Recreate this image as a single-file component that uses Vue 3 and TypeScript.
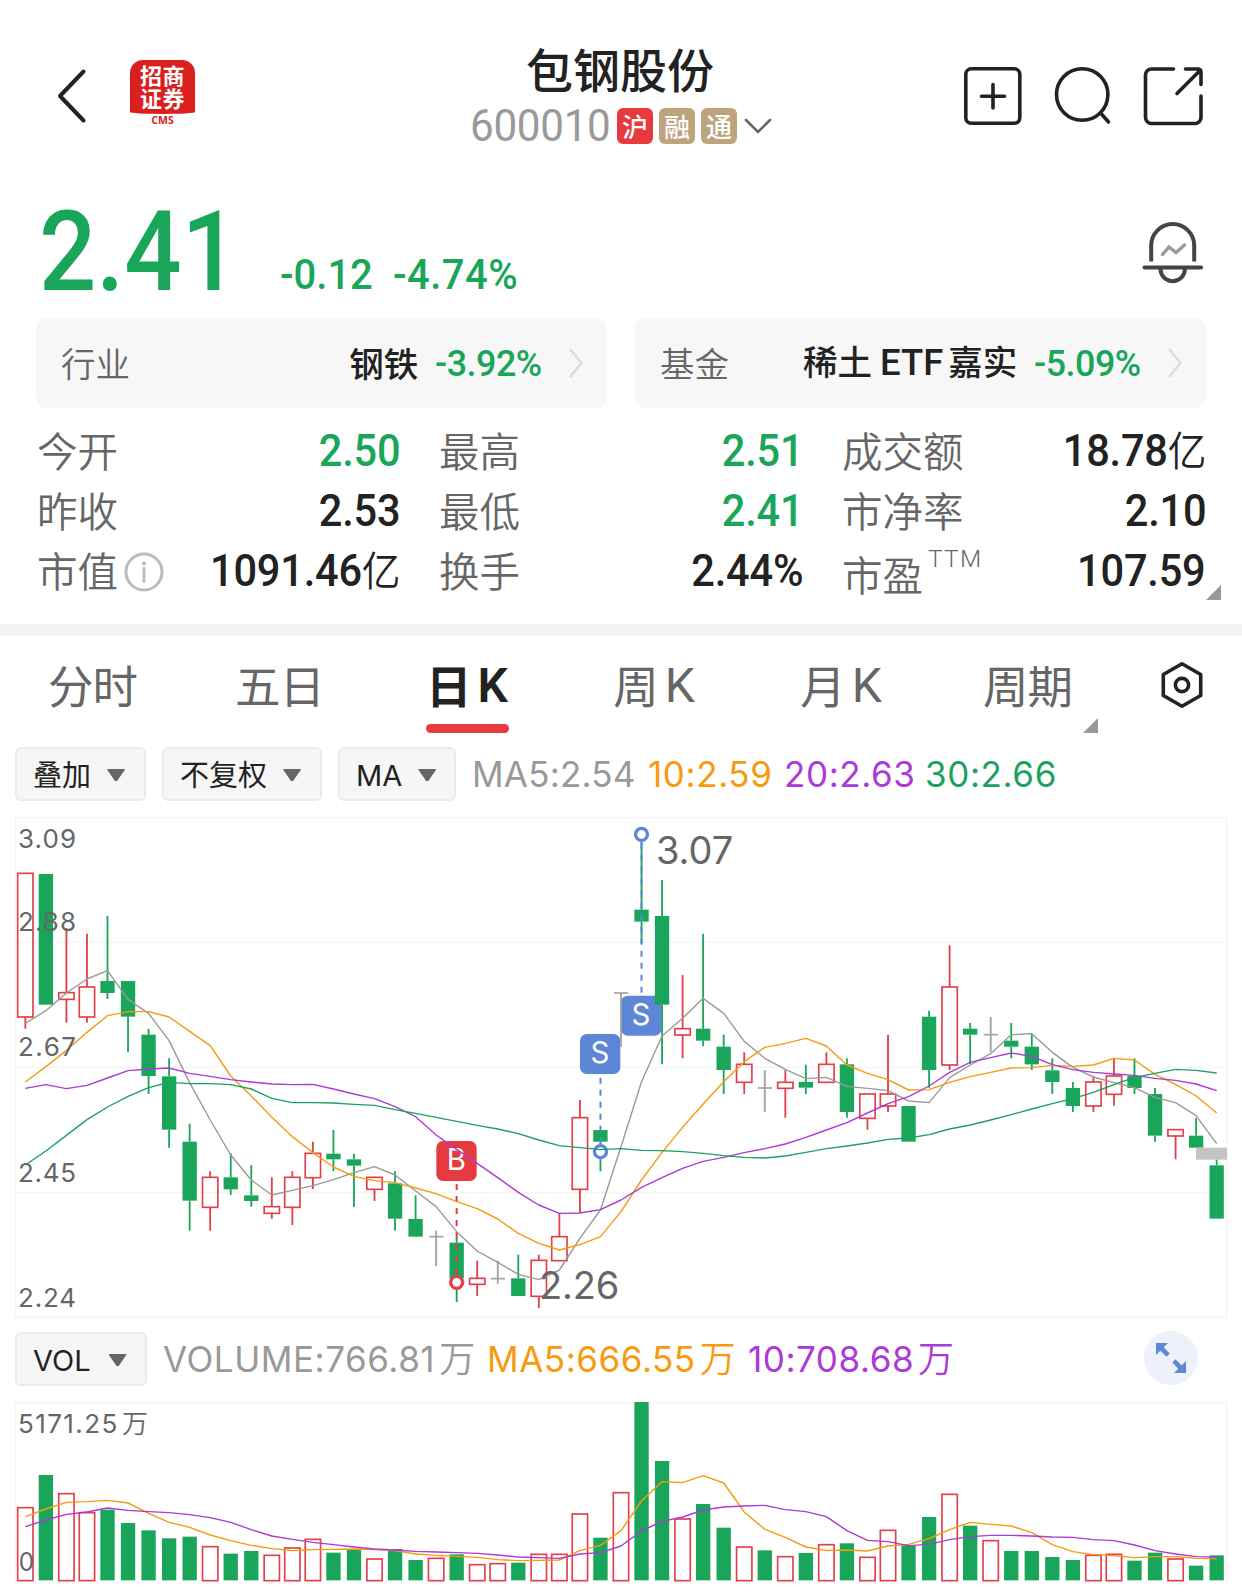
<script setup lang="ts">
type Kind = 'r' | 'g' | 'n'
type Candle = [Kind, number, number, number, number]

/* Chart geometry is kept at three units per pixel. */
const STEP = 61.62
const cx = (i: number): number => 76 + STEP * i

const candles: Candle[] = [
  ['r', 190, 190, 621, 656], ['g', 192, 192, 584, 584], ['r', 355, 548, 568, 638], ['r', 371, 531, 621, 638],
  ['g', 318, 513, 549, 567], ['g', 513, 513, 620, 727], ['g', 656, 674, 798, 852], ['g', 745, 799, 959, 1013],
  ['g', 941, 995, 1172, 1262], ['r', 1084, 1102, 1192, 1262], ['g', 1030, 1102, 1138, 1155], ['g', 1066, 1156, 1173, 1190],
  ['r', 1102, 1190, 1210, 1226], ['r', 1084, 1102, 1192, 1245], ['r', 995, 1030, 1103, 1137], ['g', 960, 1031, 1048, 1084],
  ['g', 1031, 1048, 1067, 1191], ['r', 1100, 1102, 1138, 1173], ['g', 1084, 1120, 1226, 1262], ['g', 1156, 1227, 1280, 1280],
  ['n', 1262, 1280, 1280, 1369], ['g', 1280, 1298, 1405, 1476], ['r', 1352, 1405, 1423, 1458], ['n', 1352, 1406, 1406, 1422],
  ['g', 1334, 1405, 1458, 1458], ['r', 1334, 1351, 1459, 1494], ['r', 1210, 1280, 1352, 1352], ['r', 870, 923, 1138, 1208],
  ['g', 960, 960, 995, 1084], ['n', 548, 549, 549, 710], ['g', 80, 299, 335, 400], ['g', 210, 318, 584, 763],
  ['r', 495, 656, 675, 745], ['g', 371, 656, 692, 709], ['g', 674, 710, 780, 852], ['r', 727, 763, 817, 852],
  ['n', 781, 834, 834, 906], ['r', 781, 817, 835, 923], ['g', 764, 816, 833, 852], ['r', 727, 763, 817, 817],
  ['g', 745, 763, 906, 923], ['r', 851, 852, 925, 959], ['r', 674, 852, 888, 906], ['g', 888, 888, 995, 995],
  ['g', 602, 620, 780, 833], ['r', 406, 531, 765, 780], ['g', 639, 656, 674, 762], ['n', 621, 674, 674, 726],
  ['g', 639, 692, 710, 745], ['g', 673, 710, 763, 780], ['g', 745, 781, 816, 852], ['g', 816, 834, 888, 906],
  ['r', 799, 816, 888, 906], ['r', 745, 798, 853, 887], ['g', 745, 798, 834, 852], ['g', 834, 852, 977, 995],
  ['r', 957, 959, 978, 1048], ['g', 924, 977, 1013, 1013], ['g', 1048, 1066, 1226, 1226],
]

const volKinds = 'rgrrgggggrggrrrggrggrgrrgrrrgrggrggrgrgrgrrggrgrggggrrggrgg'
const volTops: number[] = [
  563, 465, 521, 578, 569, 609, 631, 655, 650, 680, 701, 693, 706, 684, 658, 698, 687, 717, 687, 720,
  715, 703, 734, 731, 728, 703, 703, 582, 653, 518, 246, 423, 597, 552, 623, 681, 691, 710, 699, 674,
  670, 712, 631, 676, 591, 523, 617, 662, 693, 693, 711, 720, 706, 703, 722, 698, 717, 737, 706,
]

const poly = (ys: number[]): string => ys.map((y, i) => `${cx(i).toFixed(1)},${y}`).join(' ')

const priceLines = [
  { color: '#999999', pts: poly([640, 602, 549, 507, 482, 568, 610, 692, 818, 930, 1035, 1110, 1155, 1141, 1127, 1109, 1088, 1070, 1095, 1143, 1190, 1265, 1323, 1357, 1393, 1409, 1380, 1285, 1200, 1010, 815, 678, 625, 565, 610, 694, 745, 778, 806, 802, 829, 835, 842, 873, 878, 803, 765, 731, 674, 671, 727, 772, 801, 818, 833, 862, 878, 917, 1001]) },
  { color: '#f79a10', pts: poly([816, 770, 721, 667, 617, 605, 605, 621, 664, 707, 798, 858, 922, 980, 1028, 1071, 1099, 1112, 1118, 1134, 1151, 1175, 1196, 1227, 1270, 1300, 1320, 1304, 1280, 1205, 1110, 1027, 952, 882, 815, 755, 712, 700, 685, 708, 765, 790, 809, 840, 839, 817, 800, 787, 774, 773, 766, 769, 765, 745, 750, 793, 823, 858, 909]) },
  { color: '#ab3ad6', pts: poly([835, 824, 836, 826, 804, 782, 777, 774, 790, 799, 809, 816, 822, 824, 823, 837, 852, 866, 890, 920, 975, 1018, 1060, 1103, 1147, 1185, 1210, 1209, 1199, 1170, 1132, 1103, 1075, 1054, 1042, 1028, 1016, 1002, 982, 960, 938, 909, 881, 860, 828, 787, 757, 743, 729, 739, 764, 779, 787, 792, 796, 805, 811, 822, 842]) },
  { color: '#1ba160', pts: poly([1065, 1023, 976, 929, 891, 859, 833, 817, 821, 821, 824, 837, 865, 878, 878, 879, 883, 886, 899, 910, 922, 934, 946, 957, 971, 990, 1007, 1013, 1019, 1016, 1021, 1022, 1025, 1030, 1037, 1042, 1044, 1038, 1027, 1016, 1008, 999, 988, 984, 974, 957, 945, 930, 914, 897, 881, 866, 847, 824, 802, 790, 778, 781, 789]) },
]
const volLines = [
  { color: '#f79a10', pts: poly([590, 567, 547, 545, 541, 549, 580, 607, 622, 645, 662, 676, 686, 692, 689, 688, 687, 689, 692, 702, 706, 709, 712, 719, 722, 721, 720, 692, 676, 632, 543, 485, 488, 467, 489, 576, 628, 652, 681, 692, 690, 693, 678, 673, 656, 629, 607, 613, 618, 638, 674, 695, 704, 707, 713, 710, 710, 715, 716]) },
  { color: '#ab3ad6', pts: poly([620, 600, 583, 576, 564, 571, 575, 578, 584, 593, 607, 629, 648, 658, 667, 674, 681, 687, 690, 694, 696, 698, 700, 705, 711, 713, 715, 702, 698, 678, 633, 604, 591, 570, 561, 558, 556, 569, 575, 590, 632, 661, 665, 677, 673, 659, 650, 646, 646, 648, 651, 652, 659, 662, 675, 692, 702, 710, 711]) },
]

const colorOf: Record<Kind, string> = { r: '#e2404a', g: '#1aa65a', n: '#a3a3a3' }

const axis = [
  { t: '3.09', y: 113 }, { t: '2.88', y: 362 }, { t: '2.67', y: 738 }, { t: '2.45', y: 1116 }, { t: '2.24', y: 1491 },
]

interface Stat { k: string; v: string; up?: boolean; unit?: string; info?: boolean; ttm?: boolean }
const stats: Stat[][] = [
  [{ k: '今开', v: '2.50', up: true }, { k: '最高', v: '2.51', up: true }, { k: '成交额', v: '18.78', unit: '亿' }],
  [{ k: '昨收', v: '2.53' }, { k: '最低', v: '2.41', up: true }, { k: '市净率', v: '2.10' }],
  [{ k: '市值', v: '1091.46', unit: '亿', info: true }, { k: '换手', v: '2.44%' }, { k: '市盈', v: '107.59', ttm: true }],
]

const tabs = ['分时', '五日', '日K', '周K', '月K', '周期']
</script>

<template>
  <main class="app">
    <header class="head">
      <svg class="back" width="30" height="56" viewBox="0 0 30 56"><path d="M26.500 3.500 3 28l23.500 24.500" fill="none" stroke="#222" stroke-width="4" stroke-linecap="round" stroke-linejoin="round" /></svg>
      <div class="logo">
        <div class="logo-red"><span>招商</span><span>证券</span></div>
        <div class="logo-cms">CMS</div>
      </div>
      <div class="title">
        <div class="name">包钢股份</div>
        <div class="code">
          <span class="num">600010</span>
          <i class="tag hot">沪</i><i class="tag">融</i><i class="tag">通</i>
          <svg class="chev" width="28" height="18" viewBox="0 0 28 18"><path d="M2 3l12 12L26 3" fill="none" stroke="#666" stroke-width="2.600" stroke-linecap="round" /></svg>
        </div>
      </div>
      <div class="tools">
        <svg width="60" height="60" viewBox="0 0 60 60" fill="none" stroke="#222" stroke-width="3.600" stroke-linecap="round">
          <rect x="2.800" y="2.800" width="54" height="54.500" rx="5.500" /><path d="M30 18.500v23.500M18.500 30.200h23" />
        </svg>
        <svg width="60" height="60" viewBox="0 0 60 60" fill="none" stroke="#222" stroke-width="3.600" stroke-linecap="round">
          <circle cx="29.200" cy="28.500" r="25.700" /><path d="M48 47.500l7.500 8.500" />
        </svg>
        <svg width="60" height="60" viewBox="0 0 60 60" fill="none" stroke="#222" stroke-width="3.600" stroke-linecap="round" stroke-linejoin="round">
          <path d="M30.500 3H8.500a6 6 0 0 0-6 6V51.500a6 6 0 0 0 6 6H52a6 6 0 0 0 6-6V30M42.500 3H55a3 3 0 0 1 3 3V18.500M57 4.500 34 27.500" />
        </svg>
      </div>
    </header>

    <section class="price">
      <span class="big">2.41</span>
      <span class="chg">-0.12</span>
      <span class="chg pct">-4.74%</span>
      <svg class="bell" width="62" height="64" viewBox="0 0 62 64" fill="none" stroke="#444" stroke-width="4" stroke-linecap="round">
        <path d="M9.200 40.500V24.500a21.500 21.500 0 0 1 43 0V40.500" stroke-linecap="butt" />
        <path d="M2.500 46.500h56.500" />
        <path d="M18.500 48a12.200 12.200 0 0 0 24.400 0" />
        <path d="M20.500 33.500l6.500-7.500 7 5.500 8.500-7.500" stroke="#999" stroke-width="3.400" />
      </svg>
    </section>

    <section class="cards">
      <div class="card"><span class="k">行业</span><b>钢铁</b><span class="p">-3.92%</span>
        <svg width="16" height="32" viewBox="0 0 16 32"><path d="M2 2l11.500 14L2 30" fill="none" stroke="#ddd" stroke-width="2.600" /></svg></div>
      <div class="card"><span class="k">基金</span><b>稀土<em>ETF</em>嘉实</b><span class="p">-5.09%</span>
        <svg width="16" height="32" viewBox="0 0 16 32"><path d="M2 2l11.500 14L2 30" fill="none" stroke="#ddd" stroke-width="2.600" /></svg></div>
    </section>

    <section class="stats">
      <div v-for="(row, ri) in stats" :key="ri" class="row">
        <div v-for="c in row" :key="c.k" class="cell">
          <span class="lab" :class="{ low: c.ttm }">{{ c.k }}</span>
          <svg v-if="c.info" class="info" width="40" height="40" viewBox="0 0 40 40"><circle cx="20" cy="20" r="18" fill="none" stroke="#bbb" stroke-width="3" /><path d="M20 16.500v13" stroke="#bbb" stroke-width="2.800" stroke-linecap="round" /><circle cx="20" cy="11.500" r="2" fill="#bbb" /></svg>
          <sup v-if="c.ttm" class="ttm">TTM</sup>
          <span class="val" :class="{ green: c.up }">{{ c.v }}<i v-if="c.unit">{{ c.unit }}</i></span>
        </div>
      </div>
      <svg class="more" width="15" height="15" viewBox="0 0 15 15"><path d="M15 0v15H0z" fill="#999" /></svg>
    </section>

    <div class="divider"></div>

    <nav class="tabs">
      <div v-for="t in tabs" :key="t" class="tab" :class="{ on: t === '日K' }">
        <span>{{ t[0] }}</span><span v-if="t[1] === 'K'" class="lat">K</span><span v-else>{{ t[1] }}</span>
        <svg v-if="t === '周期'" class="corner" width="15" height="15" viewBox="0 0 15 15"><path d="M15 0v15H0z" fill="#999" /></svg>
      </div>
      <svg class="gear" width="44" height="48" viewBox="0 0 44 48" fill="none" stroke="#222" stroke-width="3.600" stroke-linejoin="round"><path d="M22 2.800 40.700 13.500v21L22 45.300 3.300 34.500v-21z" /><circle cx="22" cy="24" r="6.600" /></svg>
    </nav>

    <div class="bar">
      <button class="btn b1">叠加<i></i></button>
      <button class="btn b2">不复权<i></i></button>
      <button class="btn b3">MA<i></i></button>
      <span class="lg l1">MA5:2.54</span><span class="lg l2">10:2.59</span><span class="lg l3">20:2.63</span><span class="lg l4">30:2.66</span>
    </div>

    <svg class="chart" width="1242" height="520" viewBox="0 0 3726 1560">
      <g stroke="#f4f4f4" stroke-width="4" fill="none">
        <rect x="46" y="23" width="3634" height="1498" />
        <path d="M46 397H3680M46 772H3680M46 1147H3680" />
      </g>
      <g font-family="Inter, sans-serif" font-size="88" fill="#fff" text-anchor="middle">
        <rect x="1309" y="993" width="121" height="120" rx="20" fill="#e63a40" /><text x="1369" y="1080">B</text>
        <rect x="1740" y="672" width="121" height="120" rx="20" fill="#5d86d6" /><text x="1800" y="759">S</text>
        <rect x="1863" y="557" width="121" height="120" rx="20" fill="#5d86d6" /><text x="1923" y="644">S</text>
      </g>
      <g v-for="(c, i) in candles" :key="i" :stroke="colorOf[c[0]]" fill="none">
        <path :d="`M${cx(i)} ${c[1]}V${c[2]}M${cx(i)} ${c[3]}V${c[4]}`" stroke-width="5.500" />
        <rect v-if="c[0] === 'g'" :x="cx(i) - 21.500" :y="c[2]" width="43" :height="c[3] - c[2]" :fill="colorOf.g" stroke="none" />
        <rect v-else-if="c[0] === 'r'" :x="cx(i) - 23" :y="c[2]" width="46" :height="c[3] - c[2]" stroke-width="5" />
        <path v-else :d="`M${cx(i) - 21} ${c[2]}h43`" stroke-width="5" />
      </g>
      <rect x="3588" y="1013" width="93" height="36" fill="#c4c4c4" />
      <g fill="none" stroke-width="6" stroke-dasharray="18 18">
        <path d="M1370 1122V1400" stroke="#e63a40" />
        <path d="M1801.500 803V1008" stroke="#5d86d6" />
        <path d="M1924.500 96V550" stroke="#5d86d6" stroke-dashoffset="-2" />
      </g>
      <g fill="#fff" stroke-width="10">
        <circle cx="1370" cy="1417" r="18" stroke="#e2404a" />
        <circle cx="1801.500" cy="1025" r="18" stroke="#5d86d6" />
        <circle cx="1924.500" cy="73" r="18" stroke="#5d86d6" />
      </g>
      <polyline v-for="l in priceLines" :key="l.color" :points="l.pts" fill="none" :stroke="l.color" stroke-width="4.200" stroke-linejoin="round" />
      <g font-family="Inter, sans-serif" fill="#666">
        <text v-for="a in axis" :key="a.t" x="54" :y="a.y" font-size="78" textLength="174">{{ a.t }}</text>
        <text x="1968" y="162" font-size="114" textLength="232">3.07</text>
        <text x="1617" y="1467" font-size="114" textLength="241">2.26</text>
      </g>
    </svg>

    <div class="bar vol">
      <button class="btn b4">VOL<i></i></button>
      <span class="lg v1">VOLUME:766.81<u>万</u></span><span class="lg v2">MA5:666.55<u>万</u></span><span class="lg v3">10:708.68<u>万</u></span>
      <svg class="expand" width="54" height="54" viewBox="0 0 54 54">
        <circle cx="27" cy="27" r="27" fill="#edf1fa" />
        <g fill="#5f87d6" stroke="#5f87d6" stroke-width="4.600"><path d="M12 12h12L12 24z" stroke="none" /><path d="M15 15l9.200 9.200" /><path d="M42 42H30l12-12z" stroke="none" /><path d="M39 39l-9.200-9.200" /></g>
      </svg>
    </div>

    <svg class="chart" width="1242" height="204" viewBox="0 204 3726 612">
      <path d="M46 785V248H3680V785" stroke="#f4f4f4" stroke-width="4" fill="none" />
      <template v-for="(t, i) in volTops" :key="i">
        <rect v-if="volKinds[i] === 'g'" :x="cx(i) - 21.500" :y="t" width="43" :height="781 - t" fill="#1aa65a" />
        <rect v-else :x="cx(i) - 23" :y="t" width="46" :height="782 - t" fill="none" stroke="#e2404a" stroke-width="5" />
      </template>
      <polyline v-for="l in volLines" :key="l.color" :points="l.pts" fill="none" :stroke="l.color" stroke-width="4.200" stroke-linejoin="round" />
      <g font-family="Inter, 'Noto Sans CJK SC', sans-serif" font-size="78" fill="#666">
        <text x="54" y="339" textLength="298">5171.25</text><text x="366" y="339" font-weight="350">万</text>
        <text x="56" y="752" textLength="46" lengthAdjust="spacingAndGlyphs">0</text>
      </g>
    </svg>
  </main>
</template>

<style>
body { background: #fff; }
</style>

<style scoped>
.app { width: 1242px; height: 1592px; overflow: hidden; background: #fff; color: #222; font-family: Roboto, 'Noto Sans CJK SC', sans-serif; }
.app svg { display: block; flex: none; }
i, em, u { font-style: normal; text-decoration: none; }
span, b { white-space: nowrap; }

.head { height: 160px; display: flex; box-sizing: border-box; padding: 0 39px 0 57px; }
.back { margin-top: 68px; }
.logo { margin: 60px 0 0 43px; width: 65px; height: 66px; border-radius: 13px; flex: none; box-shadow: 0 0 1px #ccc; }
.logo-red { height: 54px; background: #d9201f; color: #fff; font: 700 22px/23px 'Noto Sans CJK SC', sans-serif; text-align: center; padding-top: 3px; box-sizing: border-box; border-radius: 13px 13px 50% 50% / 13px 13px 2px 2px; }
.logo-red span { display: block; height: 23px; letter-spacing: .5px; }
.logo-cms { font: 700 10.500px/12px 'Open Sans', sans-serif; color: #d9201f; text-align: center; }
.title { margin-left: 275px; width: 302px; }
.name { margin: 44px 0 0 56px; height: 48px; font: 500 47px/48px 'Noto Sans CJK SC', sans-serif; }
.code { display: flex; align-items: center; margin-top: 10px; height: 48px; }
.num { font-size: 43.500px; color: #999; width: 147px; letter-spacing: -.3px; transform: scaleX(.97); transform-origin: 0 50%; }
.tag { width: 36px; height: 36px; border-radius: 6px; background: #bda47c; color: #fff; font: 500 26px/35px 'Noto Sans CJK SC', sans-serif; text-align: center; margin-right: 6px; flex: none; }
.tag.hot { background: #e63a3f; }
.chev { margin-left: 1px; }
.tools { margin: 66px 0 0 auto; display: flex; gap: 30px; flex: none; }

.price { height: 158px; display: flex; align-items: baseline; color: #1aa65a; }
.big { font-size: 112px; font-weight: 500; line-height: 183px; margin-left: 39px; width: 241px; transform: scaleX(.9); transform-origin: 0 50%; }
.chg { font-size: 42.500px; font-weight: 500; width: 113px; transform: translateY(-1.500px) scaleX(.94); transform-origin: 0 50%; }
.chg.pct { width: auto; letter-spacing: .5px; }
.bell { margin: 60.500px 38px 0 auto; align-self: flex-start; }

.cards { display: flex; height: 90px; padding: 0 36px; gap: 28px; }
.card { flex: 1; background: #f7f7f7; border-radius: 11px; display: flex; align-items: center; padding: 0 23px 0 25px; }
.card .k { color: #666; margin: 0 auto 3px 0; font: 350 34.500px/40px 'Noto Sans CJK SC', sans-serif; }
.card b { font: 500 34.500px/40px 'Noto Sans CJK SC', sans-serif; margin-bottom: 3px; }
.card em { font-family: Roboto, sans-serif; font-size: 36.500px; margin: 0 5px 0 8px; }
.card .p { color: #1aa65a; font-size: 37.500px; font-weight: 500; margin: 0 26px 0 12px; letter-spacing: -.5px; transform: scaleX(.955); transform-origin: 100% 50%; }

.stats { height: 216px; padding: 13.500px 36px 0; box-sizing: border-box; position: relative; }
.row { display: grid; grid-template-columns: 364px 365px 365px; column-gap: 38px; height: 60px; }
.cell { display: flex; align-items: center; min-width: 0; height: 60px; }
.lab { font: 350 40.500px/56px 'Noto Sans CJK SC', sans-serif; color: #666; margin: 0 0 3px 1px; }
.lab.low { margin-bottom: -4px; }
.info { margin-left: 6px; }
.ttm { font: 350 24.500px/24px Roboto, sans-serif; color: #666; align-self: flex-start; margin: 5px 0 0 5px; letter-spacing: 1.300px; }
.val { margin-left: auto; font-size: 43.500px; font-weight: 500; line-height: 60px; letter-spacing: -.2px; transform: scaleX(.955); transform-origin: 100% 50%; }
.val i { font: 350 40.500px/40px 'Noto Sans CJK SC', sans-serif; }
.val.green { color: #1aa65a; }
.more { position: absolute; right: 21px; bottom: 24px; }

.divider { height: 12px; background: #f4f4f4; }

.tabs { height: 104px; display: flex; }
.tab { width: 187px; height: 100px; display: flex; justify-content: center; position: relative; font: 400 45.500px/96px 'Noto Sans CJK SC', sans-serif; color: #666; text-indent: -1px; }
.tab .lat { font-family: Roboto, sans-serif; font-size: 48px; line-height: 99px; margin-left: 7px; }
.tab.on { color: #222; font-weight: 600; }
.tab.on::after { content: ''; position: absolute; left: 52px; top: 88px; width: 83px; height: 9px; border-radius: 5px; background: #e63a3f; }
.corner { position: absolute; right: 24px; top: 82px; }
.gear { margin: 25px 0 0 38px; }

.bar { height: 70px; display: flex; padding: 7px 0 0 15px; box-sizing: border-box; }
.btn { height: 54px; box-sizing: border-box; background: #f6f6f6; border: 2px solid #ebebeb; border-radius: 6px; display: flex; align-items: center; padding: 3px 0 0 16px; margin: 0 16px 0 0; color: #222; font: 400 29px/50px Inter, 'Noto Sans CJK SC', sans-serif; flex: none; }
.btn i { margin: 0 0 1px 16px; width: 18px; height: 13px; background: #666; clip-path: polygon(6% 0, 94% 0, 100% 8%, 56% 96%, 44% 96%, 0 8%); }
.b1 { width: 131px; }
.b2 { width: 160px; }
.b3 { width: 118px; }
.b4 { width: 132px; }
.b4 i { margin-left: 18px; }
.lg { font: 400 35px/55px Inter, 'Noto Sans CJK SC', sans-serif; color: #999; flex: none; letter-spacing: .6px; }
.lg u { font-weight: 350; font-size: 36px; margin-left: 4px; }
.l1 { width: 176px; letter-spacing: .2px; }
.l2 { width: 136px; color: #f79a10; }
.l3 { width: 141px; color: #ab3ad6; }
.l4 { color: #1ba160; }
.vol { height: 58px; padding-top: 2px; }
.vol .lg { letter-spacing: .55px; }
.v1 { width: 324px; }
.v2 { width: 261px; color: #f79a10; }
.v3 { color: #ab3ad6; }
.expand { margin: -1px 44px 0 auto; }
</style>
